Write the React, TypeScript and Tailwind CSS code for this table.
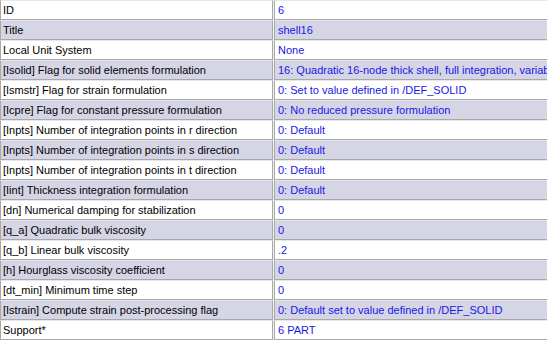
const rows: [string, string][] = [
  ['ID', '6'],
  ['Title', 'shell16'],
  ['Local Unit System', 'None'],
  ['[Isolid] Flag for solid elements formulation', '16: Quadratic 16-node thick shell, full integration, variable'],
  ['[Ismstr] Flag for strain formulation', '0: Set to value defined in /DEF_SOLID'],
  ['[Icpre] Flag for constant pressure formulation', '0: No reduced pressure formulation'],
  ['[Inpts] Number of integration points in r direction', '0: Default'],
  ['[Inpts] Number of integration points in s direction', '0: Default'],
  ['[Inpts] Number of integration points in t direction', '0: Default'],
  ['[Iint] Thickness integration formulation', '0: Default'],
  ['[dn] Numerical damping for stabilization', '0'],
  ['[q_a] Quadratic bulk viscosity', '0'],
  ['[q_b] Linear bulk viscosity', '.2'],
  ['[h] Hourglass viscosity coefficient', '0'],
  ['[dt_min] Minimum time step', '0'],
  ['[Istrain] Compute strain post-processing flag', '0: Default set to value defined in /DEF_SOLID'],
  ['Support*', '6 PART'],
];

export default function App() {
  return (
    <div className="w-[547px] h-[341px] overflow-hidden bg-white font-['Liberation_Sans',Arial,sans-serif] text-[11px] leading-[18px]">
      <table className="-ml-[1px] border-separate border-spacing-x-[1px] border-spacing-y-0 w-[620px] bg-[#f0f0f0]">
        <tbody>
          {rows.map(([label, value], i) => {
            const bg = i % 2 === 1 ? 'bg-[#d5d5e6]' : 'bg-white';
            return (
              <tr key={i}>
                <td className={`${bg} w-[273px] h-[20px] border-x border-x-[#a9a9a9] border-t border-t-[#e6e6e6] border-b border-b-[#a9a9a9] pl-[2px] pr-0 pt-[1px] pb-0 leading-[17px] text-black whitespace-nowrap overflow-hidden`}>
                  {label}
                </td>
                <td className={`${bg} h-[20px] border-x border-x-[#a9a9a9] border-t border-t-[#e6e6e6] border-b border-b-[#a9a9a9] pl-[3px] pt-[1px] pb-0 leading-[17px] text-[#1818e6] whitespace-nowrap overflow-hidden`}>
                  {value}
                </td>
              </tr>
            );
          })}
        </tbody>
      </table>
    </div>
  );
}
